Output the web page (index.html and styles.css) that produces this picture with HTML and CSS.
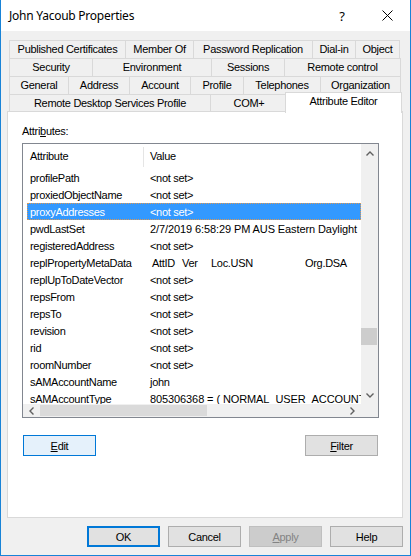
FILE: index.html
```html
<!DOCTYPE html>
<html>
<head>
<meta charset="utf-8">
<link rel="stylesheet" href="styles.css">
</head>
<body>
<div class="window">
  <div class="titlebar">
    <span class="title">John Yacoub Properties</span>
    <span class="capbtn help">?</span>
    <span class="capbtn">
      <svg width="11" height="11" viewBox="0 0 11 11"><path d="M0.5 0.5 L10.5 10.5 M10.5 0.5 L0.5 10.5" stroke="#000" stroke-width="1" fill="none"/></svg>
    </span>
  </div>
  <div class="body">
    <div class="tabs">
      <div class="tabrow r1">
        <div class="tab">Published Certificates</div>
        <div class="tab">Member Of</div>
        <div class="tab">Password Replication</div>
        <div class="tab">Dial-in</div>
        <div class="tab">Object</div>
      </div>
      <div class="tabrow r2">
        <div class="tab">Security</div>
        <div class="tab">Environment</div>
        <div class="tab">Sessions</div>
        <div class="tab">Remote control</div>
      </div>
      <div class="tabrow r3">
        <div class="tab">General</div>
        <div class="tab">Address</div>
        <div class="tab">Account</div>
        <div class="tab">Profile</div>
        <div class="tab">Telephones</div>
        <div class="tab">Organization</div>
      </div>
      <div class="tabrow r4">
        <div class="tab">Remote Desktop Services Profile</div>
        <div class="tab">COM+</div>
        <div class="tab sel">Attribute Editor</div>
      </div>
    </div>
    <div class="panel">
      <div class="label">Attri<u>b</u>utes:</div>
      <div class="listbox">
        <div class="listarea">
          <div class="lhead">
            <div class="hcell h1">Attribute</div>
            <div class="hcell h2">Value</div>
          </div>
          <div class="lrow"><span class="c1">profilePath</span><span class="c2">&lt;not set&gt;</span></div>
          <div class="lrow"><span class="c1">proxiedObjectName</span><span class="c2">&lt;not set&gt;</span></div>
          <div class="lrow selected"><span class="c1">proxyAddresses</span><span class="c2">&lt;not set&gt;</span></div>
          <div class="lrow"><span class="c1">pwdLastSet</span><span class="c2 wide">2/7/2019 6:58:29 PM AUS Eastern Daylight</span></div>
          <div class="lrow"><span class="c1">registeredAddress</span><span class="c2">&lt;not set&gt;</span></div>
          <div class="lrow"><span class="c1">replPropertyMetaData</span><span class="c2 meta"><span class="m1">AttID</span><span class="m2">Ver</span><span class="m3">Loc.USN</span><span>Org.DSA</span></span></div>
          <div class="lrow"><span class="c1">replUpToDateVector</span><span class="c2">&lt;not set&gt;</span></div>
          <div class="lrow"><span class="c1">repsFrom</span><span class="c2">&lt;not set&gt;</span></div>
          <div class="lrow"><span class="c1">repsTo</span><span class="c2">&lt;not set&gt;</span></div>
          <div class="lrow"><span class="c1">revision</span><span class="c2">&lt;not set&gt;</span></div>
          <div class="lrow"><span class="c1">rid</span><span class="c2">&lt;not set&gt;</span></div>
          <div class="lrow"><span class="c1">roomNumber</span><span class="c2">&lt;not set&gt;</span></div>
          <div class="lrow"><span class="c1">sAMAccountName</span><span class="c2">john</span></div>
          <div class="lrow"><span class="c1">sAMAccountType</span><span class="c2 wide">805306368 = ( NORMAL_USER_ACCOUNT</span></div>
        </div>
        <div class="vscroll">
          <div class="sbtn up"><svg width="8" height="5" viewBox="0 0 8 5"><path d="M0.5 4.5 L4 1 L7.5 4.5" stroke="#606060" stroke-width="1.4" fill="none"/></svg></div>
          <div class="vtrack"><div class="vthumb"></div></div>
          <div class="sbtn"><svg width="8" height="5" viewBox="0 0 8 5"><path d="M0.5 0.5 L4 4 L7.5 0.5" stroke="#606060" stroke-width="1.4" fill="none"/></svg></div>
        </div>
        <div class="hscroll">
          <div class="hbtn"><svg width="5" height="8" viewBox="0 0 5 8"><path d="M4.5 0.5 L1 4 L4.5 7.5" stroke="#606060" stroke-width="1.4" fill="none"/></svg></div>
          <div class="htrack"><div class="hthumb"></div></div>
          <div class="hbtn"><svg width="5" height="8" viewBox="0 0 5 8"><path d="M0.5 0.5 L4 4 L0.5 7.5" stroke="#606060" stroke-width="1.4" fill="none"/></svg></div>
        </div>
        <div class="corner"></div>
      </div>
      <div class="btnrow">
        <button class="btn focus"><u>E</u>dit</button>
        <button class="btn"><u>F</u>ilter</button>
      </div>
    </div>
    <div class="dlgbtns">
      <button class="btn default">OK</button>
      <button class="btn">Cancel</button>
      <button class="btn disabled"><u>A</u>pply</button>
      <button class="btn">Help</button>
    </div>
  </div>
</div>
</body>
</html>
```
FILE: styles.css
```css
* { box-sizing: border-box; }
html, body { margin: 0; padding: 0; background: #fff; }
body {
  font-family: "Liberation Sans", Arial, sans-serif;
  font-size: 11px;
  color: #000;
}
.window {
  width: 411px;
  height: 556px;
  border: 1px solid #1883d7;
  border-top: none;
  background: #f0f0f0;
  display: flex;
  flex-direction: column;
}
.titlebar {
  height: 31px;
  background: #fff;
  display: flex;
  align-items: center;
}
.title {
  flex: 1;
  padding-left: 8px;
  font-family: "Noto Sans", "Open Sans", sans-serif;
  font-size: 12px;
  letter-spacing: -0.25px;
}
.capbtn {
  width: 46px;
  height: 31px;
  display: flex;
  align-items: center;
  justify-content: center;
  font-family: "Noto Sans", sans-serif;
  font-size: 13px;
}
.help { padding-left: 2px; }
.body {
  padding: 9px 7px 8px 6px;
  display: flex;
  flex-direction: column;
}
.tabs { margin-left: 2px; }
.tabrow { display: grid; height: 18px; }
.r1 { grid-template-columns: 116px 68px 119px 43px 45px; }
.r2 { grid-template-columns: 83px 119px 73px 117px; }
.r3 { grid-template-columns: 59px 61px 61px 53px 77px 81px; }
.r4 { grid-template-columns: 201px 77px 113px; height: 17px; }
.tab {
  border-top: 1px solid #d9d9d9;
  border-left: 1px solid #d9d9d9;
  text-align: center;
  line-height: 17px;
  white-space: nowrap;
  letter-spacing: -0.3px;
  background: #f0f0f0;
}
.tab:last-child { border-right: 1px solid #d9d9d9; }
.tab.sel {
  background: #fff;
  margin: -2px -2px -1px -2px;
  position: relative;
  z-index: 1;
  line-height: 16px;
}
.panel {
  width: 396px;
  height: 407px;
  background: #fff;
  border: 1px solid #d9d9d9;
  padding: 12px 0 0 14px;
}
.label {
  line-height: 14px;
  letter-spacing: -0.3px;
}
.listbox {
  margin-top: 5px;
  width: 357px;
  height: 275px;
  border: 1px solid #828790;
  display: grid;
  grid-template-columns: 338px 17px;
  grid-template-rows: 260px 13px;
}
.listarea {
  overflow: hidden;
  letter-spacing: -0.3px;
}
.lhead {
  display: flex;
  height: 23px;
  margin-bottom: 2px;
}
.hcell {
  line-height: 25px;
  white-space: nowrap;
}
.h1 {
  width: 121px;
  padding-left: 7px;
  border-right: 1px solid #e5e5e5;
  margin: 3px 0 0;
  line-height: 19px;
  height: 20px;
}
.h2 { padding-left: 6px; }
.lrow {
  display: flex;
  height: 17px;
  line-height: 17px;
  padding-top: 1px;
  margin-left: 4px;
  padding-left: 3px;
  white-space: nowrap;
  overflow: hidden;
}
.lrow.selected {
  background: #3399ff;
  color: #fff;
  outline: 1px dotted #e09850;
  outline-offset: -1px;
}
.c1 { width: 120px; flex: none; }
.c2 { flex: none; }
.c2.wide { letter-spacing: -0.1px; }
.meta { display: flex; padding-left: 2px; }
.m1 { width: 30px; }
.m2 { width: 29px; }
.m3 { width: 94px; }
.vscroll {
  background: #f0f0f0;
  display: flex;
  flex-direction: column;
}
.sbtn {
  height: 17px;
  display: flex;
  align-items: center;
  justify-content: center;
}
.sbtn.up { padding-top: 2px; }
.vtrack { flex: 1; }
.vthumb {
  margin: 167px 1px 0 0;
  height: 17px;
  background: #cdcdcd;
}
.hscroll {
  background: #f0f0f0;
  display: flex;
}
.hbtn {
  width: 17px;
  display: flex;
  align-items: center;
  justify-content: center;
}
.htrack { flex: 1; padding: 1px 0; }
.hthumb {
  width: 167px;
  height: 11px;
  background: #dadada;
}
.corner { background: #f0f0f0; }
.btnrow {
  margin-top: 17px;
  width: 357px;
  padding: 0 1px;
  display: flex;
  justify-content: space-between;
}
.btn {
  width: 73px;
  height: 21px;
  padding: 0;
  margin: 0;
  border: 1px solid #adadad;
  background: #e1e1e1;
  font-family: "Liberation Sans", Arial, sans-serif;
  font-size: 11px;
  letter-spacing: -0.3px;
  color: #000;
}
.btn.focus {
  border-color: #0078d7;
  background: #e5f1fb;
}
.btn.default {
  border: 2px solid #0078d7;
}
.btn.disabled {
  background: #cccccc;
  border-color: #bfbfbf;
  color: #838383;
}
.dlgbtns {
  margin-top: 8px;
  display: flex;
  justify-content: flex-end;
  gap: 8px;
}
```
